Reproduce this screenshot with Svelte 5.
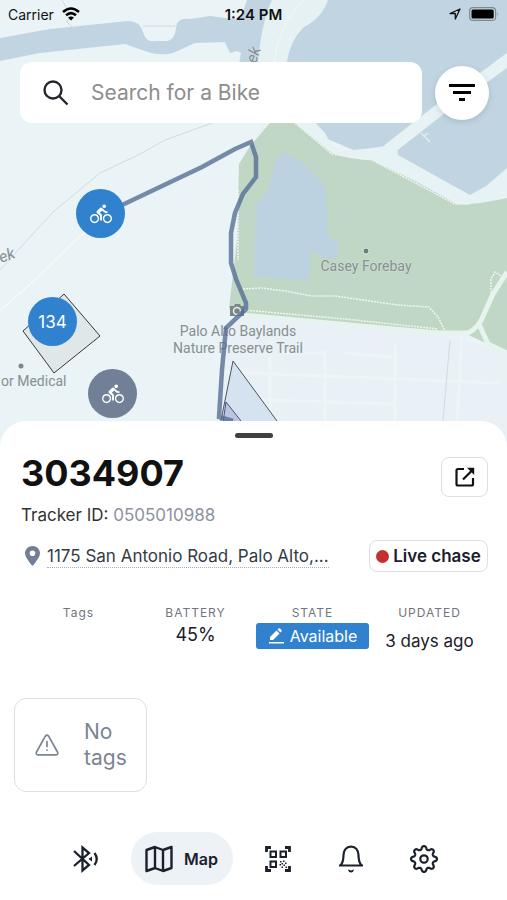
<script>
  let search = $state("");

  const pins = [
    { id: "a", x: 76, y: 189, kind: "bike", label: "Bike" },
    { id: "b", x: 28, y: 297, kind: "count", count: 134, label: "134 bikes" },
    { id: "c", x: 88, y: 369, kind: "bike", idle: true, label: "Idle bike" }
  ];

  const bike = {
    name: "3034907",
    tracker: "0505010988",
    address: "1175 San Antonio Road, Palo Alto,...",
    battery: "45%",
    state: "Available",
    updated: "3 days ago"
  };

  // outline with eight rounded teeth
  function gearPath(cx, cy) {
    let d = "";
    for (let a = 0; a < 360; a += 3) {
      const t = (a * Math.PI) / 180;
      const r = 11.3 + 1.9 * Math.tanh(1.3 * Math.cos(8 * t));
      d += (a ? "L" : "M") + (cx + r * Math.cos(t)).toFixed(2) + " " + (cy + r * Math.sin(t)).toFixed(2);
    }
    return d + "Z";
  }
</script>

<div class="app">
  <section class="map">
    <svg class="tiles" viewBox="0 0 507 450" preserveAspectRatio="xMidYMin slice" aria-hidden="true">
      <rect width="507" height="450" fill="#eaf3f5" />
      <path d="M232 315L440 335 507 352V450H215Z" fill="#e9f1f6" />
      <path d="M0 38L50 29 128 21Q140 21 143 32T155 41H168Q175 39 176 28T190 19L210 16 240 20 247 0H507V200H470L260 110 239 64 241 53 237 51 230 53 225 42 195 43 173 53Q160 56 148 52L125 44 40 53 0 61Z" fill="#c0d5e1" />
      <path d="M272 0Q262 20 258 62L240 70V140L290 160 312 123 287 62Q290 40 304 27 322 18 328 0Z" fill="#e6f1f3" />
      <path d="M0 70H240L262 123 240 200H0Z" fill="#eaf3f5" />
      <path d="M258 118H311L325 133Q333 150 345 151L380 147 397 143 398 155 470 195 486 186 507 168V215L460 215 280 160Z" fill="#e6f2f3" />
      <path d="M388 150L439 110 490 73 510 58" fill="none" stroke="#e6f2f3" stroke-width="12" />
      <path d="M421 133L430 142M424 136L428 133" stroke="#d9e7ee" stroke-width="2" />
      <path d="M304 0Q280 22 274 62" fill="none" stroke="#f3f8f8" />
      <path d="M270 123H295L332 153Q350 160 372 160L415 181 455 203Q465 207 507 198V352L488 344 466 334 438 333 232 315 229 308 237 240 239 164 250 146Z" fill="#c0d7c6" />
      <path d="M283 152L300 160 318 178 325 186 328 235 338 243 337 258 325 258 311 250 309 281 254 276 256 205 268 190 276 160Z" fill="#bcd2e0" />
      <path d="M507 272L493 294 484 314Q479 328 468 333L438 333 350 325 232 314M479 324L488 344 507 353" fill="none" stroke="#e7f3ee" stroke-width="5" />
      <path d="M243 289L262 288 285 291 312 296 335 296 398 305 429 307 438 317 445 331M244 310L345 319 438 329M295 123L332 154 372 160 455 204H470M491 293V279L495 272 501 276M238 190V260" fill="none" stroke="#edf6ef" stroke-width="1.5" stroke-dasharray="2 1" />
      <path d="M225 342L219 421M270 340V450M325 350V450M395 345V450M225 372L500 383M462 335L457 421M283 353H325M345 353L392 357M260 400L395 404" fill="none" stroke="#eef5f7" stroke-width="3" />
      <path d="M450 340L443 421" stroke="#d3dbe0" />
      <path d="M0 311L36 279 77 239 121 206" fill="none" stroke="#f6fafa" stroke-width="1.5" />
      <path d="M0 270L53 212 100 173 140 154 165 140 212 123M62 0L72 18 66 21 74 29M143 26H177" fill="none" stroke="#d2dbdc" />
      <path d="M64 294L100 336 54 373 23 331Z" fill="#dfe7e8" stroke="#34393d" />
      <g class="place">
        <text x="366" y="271" text-anchor="middle">Casey Forebay</text>
        <text x="238" y="336" text-anchor="middle">Palo Alto Baylands</text>
        <text x="238" y="353" text-anchor="middle">Nature Preserve Trail</text>
        <text x="1" y="386">or Medical</text>
        <text class="water" transform="translate(256 64) rotate(-72)">ek</text>
        <text class="water" transform="translate(1 263) rotate(-20)">ek</text>
      </g>
      <circle cx="366" cy="251" r="3" fill="#737f7b" stroke="#d8e7dd" />
      <circle cx="21" cy="366" r="2.5" fill="#808689" />
      <path d="M230 306H234L235 304H240L241 306H244V316H230Z" fill="#7c8687" />
      <circle cx="237" cy="311" r="3.5" fill="none" stroke="#e5eeeb" stroke-width="1.5" />
      <path d="M233 361L277 421V450H215Z" fill="#d5e3f1" stroke="#4a525d" />
      <path d="M226 402L241 421V450H219Z" fill="#bcc4e2" stroke="#4b5475" />
      <path d="M120 206L202 167 235 149 251 142 256 157V177L243 194 235 213 231 233V263L236 279 246 303V309L226 328 222 370 219 417 233 421" fill="none" stroke="#536b94" stroke-opacity="0.78" stroke-width="4.5" />
    </svg>

    {#each pins as pin (pin.id)}
      <button class="pin" class:idle={pin.idle} style="left: {pin.x}px; top: {pin.y}px" aria-label={pin.label}>
        {#if pin.kind === "count"}
          {pin.count}
        {:else}
          <svg width="22" height="22" viewBox="0 0 24 24" fill="currentColor" aria-hidden="true">
            <path d="M15.5 5.5c1.1 0 2-.9 2-2s-.9-2-2-2-2 .9-2 2 .9 2 2 2zM5 12c-2.8 0-5 2.2-5 5s2.2 5 5 5 5-2.2 5-5-2.2-5-5-5zm0 8.5c-1.9 0-3.5-1.6-3.5-3.5s1.6-3.5 3.5-3.5 3.5 1.6 3.5 3.5-1.6 3.5-3.5 3.5zm5.8-10l2.4-2.4.8.8c1.3 1.3 3 2.1 5.1 2.1V9c-1.5 0-2.7-.6-3.6-1.5l-1.9-1.9c-.5-.4-1-.6-1.6-.6s-1.1.2-1.4.6L7.8 8.4c-.4.4-.6.9-.6 1.4 0 .6.2 1.1.6 1.4L11 14v5h2v-6.2l-2.2-2.3zM19 12c-2.8 0-5 2.2-5 5s2.2 5 5 5 5-2.2 5-5-2.2-5-5-5zm0 8.5c-1.9 0-3.5-1.6-3.5-3.5s1.6-3.5 3.5-3.5 3.5 1.6 3.5 3.5-1.6 3.5-3.5 3.5z" />
          </svg>
        {/if}
      </button>
    {/each}

    <div class="overlay">
      <div class="status-bar">
        <span class="carrier">
          Carrier
          <svg width="18" height="14" viewBox="0 0 18 14" fill="none" stroke="#000" stroke-width="2.6" aria-hidden="true">
            <path d="M1 5Q9 -2 17 5M4 8.3Q9 4 14 8.3" />
            <path d="M9 13.5L6 10.5Q9 8.5 12 10.5Z" fill="#000" stroke="none" />
          </svg>
        </span>
        <span class="time">1:24 PM</span>
        <span class="indicators">
          <svg width="12" height="12" viewBox="0 0 12 12" fill="none" stroke="#111" stroke-width="1.3" stroke-linejoin="round" aria-hidden="true">
            <path d="M11 1L1 5.5H6.3V11Z" />
          </svg>
          <svg width="30" height="14" viewBox="0 0 30 14" aria-hidden="true">
            <rect x="0.6" y="0.6" width="26" height="12.8" rx="3.5" fill="none" stroke="#7e8a92" stroke-width="1.2" />
            <rect x="2.5" y="2.5" width="22.2" height="9" rx="1.5" />
            <path d="M28 5Q29.5 7 28 9Z" fill="#7e8a92" />
          </svg>
        </span>
      </div>

      <div class="search-row">
        <label class="search">
          <svg width="26" height="26" viewBox="0 0 26 26" fill="none" stroke="#24282d" stroke-width="2.4" aria-hidden="true">
            <circle cx="10" cy="10" r="8.5" />
            <path d="M16 16L24.5 24.5" />
          </svg>
          <input type="text" placeholder="Search for a Bike" aria-label="Search for a Bike" bind:value={search} />
        </label>
        <button class="filter" aria-label="Filter">
          <svg width="26" height="18" viewBox="0 0 26 18" aria-hidden="true">
            <path d="M0 0H26V3H0ZM4 7H22V10H4ZM10 14H16V17H10Z" />
          </svg>
        </button>
      </div>
    </div>
  </section>

  <main class="sheet">
    <div class="handle"></div>

    <div class="heading">
      <div>
        <h1>{bike.name}</h1>
        <p class="tracker">Tracker ID: <span>{bike.tracker}</span></p>
      </div>
      <button class="open" aria-label="Open bike details">
        <svg width="20" height="20" viewBox="0 0 20 20" fill="none" stroke="#111" stroke-width="2.2" aria-hidden="true">
          <path d="M9 2H3Q1.5 2 1.5 3.5V17Q1.5 18.5 3 18.5H16.500Q18 18.5 18 17V11M8 12.5L17 3.5" />
          <path d="M12 0.8H19.2V8Z" fill="#111" stroke="none" />
        </svg>
      </button>
    </div>

    <div class="location">
      <svg width="15" height="20" viewBox="0 0 15 20" aria-hidden="true">
        <path fill-rule="evenodd" d="M7.5 0C3.3 0 0 3.2 0 7.3 0 12 7.5 20 7.5 20S15 12 15 7.3C15 3.2 11.7 0 7.5 0ZM7.5 4.5A2.8 2.8 0 1 1 7.5 10.1 2.8 2.8 0 1 1 7.5 4.5Z" fill="#718096" />
      </svg>
      <a href="#address">{bike.address}</a>
      <button class="chase"><i></i>Live chase</button>
    </div>

    <dl class="stats">
      <div>
        <dt>Tags</dt>
      </div>
      <div>
        <dt>BATTERY</dt>
        <dd class="battery">{bike.battery}</dd>
      </div>
      <div>
        <dt>STATE</dt>
        <dd>
          <button class="state">
            <svg width="16" height="16" viewBox="0 0 16 16" fill="currentColor" aria-hidden="true">
              <path d="M1 14H16V15.5H1ZM2 12V9L8.5 2.5 11.5 5.5 5 12ZM9.5 1.5L10.5 .5Q11.2 0 12 .5L13.5 2Q14 2.8 13.5 3.5L12.5 4.5Z" />
            </svg>
            {bike.state}
          </button>
        </dd>
      </div>
      <div>
        <dt>UPDATED</dt>
        <dd class="updated">{bike.updated}</dd>
      </div>
    </dl>

    <div class="no-tags">
      <svg width="24" height="22" viewBox="0 0 24 22" fill="none" stroke="#7b8494" stroke-width="1.7" stroke-linejoin="round" stroke-linecap="round" aria-hidden="true">
        <path d="M10.400 2.2Q12 0 13.6 2.2L22.5 18Q23.5 20.7 21 20.8H3Q.5 20.7 1.5 18ZM12 7.5V12.5M12 16V16.2" />
      </svg>
      <span>No tags</span>
    </div>
  </main>

  <nav>
    <button aria-label="Bluetooth">
      <svg width="26" height="28" viewBox="0 0 26 28" fill="none" stroke="#1a202c" stroke-width="2.3" aria-hidden="true">
        <path d="M1 6L16 20 9.5 25.5V2.5L16 8 1 21" />
        <path d="M21.5 8Q26 14 21.5 20" />
        <path d="M19 11.5V16.5L15.5 14Z" fill="#1a202c" stroke="none" />
      </svg>
    </button>
    <button class="active" aria-current="page">
      <svg width="28" height="28" viewBox="0 0 28 28" fill="none" stroke="#1a202c" stroke-width="2.4" stroke-linejoin="round" aria-hidden="true">
        <path d="M1.5 5L10 2 18 5 26.5 2V23L18 26 10 23 1.5 26ZM10 2V23M18 5V26" />
      </svg>
      Map
    </button>
    <button aria-label="Scan code">
      <svg width="26" height="26" viewBox="0 0 26 26" fill="none" stroke="#1a202c" stroke-width="2" aria-hidden="true">
        <path d="M1.5 6V1.5H6M20 1.5H24.5V6M1.5 20V24.5H6M20 24.5H24.5V20" stroke-width="2.8" />
        <path d="M5.500 5.5H11V11H5.5ZM15.5 5.5H21V11H15.5ZM5.5 15.5H11V21H5.5Z" />
        <path d="M15 15H16.500V16.500H15ZM18 14.500H19.500V16H18ZM16.500 17H18V18.500H16.500ZM20 16.500H21.500V18H20ZM14.500 18H16V19.500H14.500ZM18.500 18.500H20V20H18.500ZM16.500 20.500H18V22H16.500ZM20.500 20.500H22V22H20.500Z" fill="#1a202c" stroke="none" />
      </svg>
    </button>
    <button aria-label="Notifications">
      <svg width="26" height="28" viewBox="0 0 26 28" fill="none" stroke="#1a202c" stroke-width="2.2" stroke-linejoin="round" aria-hidden="true">
        <path d="M1 20.5H25M2.500 20.5Q5.500 17 5.500 10 6 2 13 1.500 20 2 20.500 10 20.500 17 23.500 20.5" />
        <path d="M10 24.5L13 25.500 16 24.5Q15.500 27.5 13 27.5T10 24.5Z" fill="#1a202c" stroke="none" />
      </svg>
    </button>
    <button aria-label="Settings">
      <svg width="32" height="32" viewBox="0 0 32 32" fill="none" stroke="#1a202c" stroke-width="2.2" stroke-linejoin="round" aria-hidden="true">
        <path d={gearPath(16, 16)} />
        <circle cx="16" cy="16" r="3.7" />
      </svg>
    </button>
  </nav>
</div>

<style>
  :global(body) {
    margin: 0;
    background: #fff;
  }
  .app {
    min-height: 100vh;
    display: flex;
    flex-direction: column;
    font-family: Inter, "Liberation Sans", sans-serif;
    color: #1a202c;
  }
  button {
    font: inherit;
    color: inherit;
    padding: 0;
    border: 0;
    background: none;
    display: flex;
    align-items: center;
    justify-content: center;
    cursor: pointer;
  }
  svg {
    flex: none;
    display: block;
  }

  .map {
    position: relative;
    height: 450px;
    overflow: hidden;
  }
  .tiles {
    position: absolute;
    inset: 0;
    width: 100%;
    height: 100%;
  }
  .place {
    font-family: Roboto, sans-serif;
    font-size: 14px;
    fill: #868f91;
    paint-order: stroke;
    stroke: #eaf3f5;
    stroke-opacity: 0.4;
    stroke-width: 1px;
  }
  .water {
    font-size: 16px;
    font-style: italic;
  }
  .pin {
    position: absolute;
    width: 49px;
    height: 49px;
    border-radius: 50%;
    background: #3182ce;
    color: #fff;
    font-size: 17px;
  }
  .idle {
    background: #718096;
  }
  .overlay {
    position: relative;
  }
  .status-bar {
    height: 28px;
    padding: 0 8px;
    display: grid;
    grid-template-columns: 1fr auto 1fr;
    align-items: center;
    font-size: 14px;
    color: #111;
  }
  .carrier,
  .indicators {
    display: flex;
    align-items: center;
    gap: 8px;
  }
  .indicators {
    justify-content: flex-end;
  }
  .time {
    font-size: 15px;
    font-weight: 600;
  }
  .search-row {
    display: flex;
    align-items: center;
    gap: 13px;
    padding: 34px 18px 0 20px;
  }
  .search {
    flex: 1;
    min-width: 0;
    height: 61px;
    box-sizing: border-box;
    padding: 0 23px;
    display: flex;
    align-items: center;
    gap: 22px;
    background: #fff;
    border-radius: 12px;
  }
  .search input {
    flex: 1;
    min-width: 0;
    padding: 0;
    border: 0;
    outline: 0;
    background: none;
    font: inherit;
    font-size: 21px;
    color: #1a202c;
  }
  .search input::placeholder {
    color: #8d8d8d;
    opacity: 1;
  }
  .filter {
    width: 54px;
    height: 54px;
    border-radius: 50%;
    background: #fff;
    box-shadow: 0 2px 6px rgba(0, 0, 0, 0.12);
  }

  .sheet {
    position: relative;
    flex: 1;
    margin-top: -29px;
    padding-top: 12px;
    background: #fff;
    border-radius: 26px 26px 0 0;
  }
  .handle {
    width: 38px;
    height: 5px;
    margin: 0 auto;
    border-radius: 3px;
    background: #404040;
  }
  .heading {
    display: flex;
    justify-content: space-between;
    align-items: flex-start;
    padding: 13px 19px 0 21px;
  }
  h1 {
    margin: 0;
    font-size: 36px;
    line-height: 44px;
    font-weight: 700;
    color: #111;
  }
  .tracker {
    margin: 8px 0 0;
    font-size: 17px;
    line-height: 24px;
    color: #333;
  }
  .tracker span {
    color: #8d929e;
  }
  .open {
    width: 47px;
    height: 40px;
    margin-top: 6px;
    border: 1px solid #dcdfe4;
    border-radius: 8px;
  }
  .location {
    display: flex;
    align-items: center;
    padding: 13px 19px 0 25px;
    font-size: 17px;
  }
  .location a {
    margin-left: 7px;
    white-space: nowrap;
    line-height: 22px;
    color: #333b46;
    text-decoration: none;
    border-bottom: 1px dotted #a6adb8;
  }
  .chase {
    width: 119px;
    height: 32px;
    gap: 4px;
    margin-left: auto;
    border: 1px solid #dcdfe4;
    border-radius: 8px;
    font-weight: 600;
    white-space: nowrap;
  }
  .chase i {
    width: 13px;
    height: 13px;
    border-radius: 50%;
    background: #c53030;
  }
  .stats {
    display: grid;
    grid-template-columns: repeat(4, 1fr);
    margin: 33px 19px 0 20px;
    text-align: center;
  }
  dt {
    font-size: 12px;
    line-height: 16px;
    letter-spacing: 1px;
    color: #71757d;
  }
  dd {
    margin: 2px 0 0;
    display: flex;
    justify-content: center;
  }
  .battery {
    font-size: 18px;
    line-height: 24px;
  }
  .updated {
    margin-top: 8px;
    font-size: 17px;
    line-height: 24px;
    white-space: nowrap;
  }
  .state {
    width: 113px;
    height: 26px;
    gap: 6px;
    border-radius: 3px;
    background: #3182ce;
    color: #fff;
    font-size: 16px;
  }
  .no-tags {
    box-sizing: border-box;
    width: 133px;
    height: 94px;
    margin: 45px 0 0 14px;
    padding: 0 14px 0 20px;
    display: flex;
    align-items: center;
    gap: 25px;
    border: 1px solid #dcdfe4;
    border-radius: 12px;
    font-size: 21px;
    line-height: 26px;
    color: #7b8494;
  }

  nav {
    display: flex;
    justify-content: center;
    align-items: center;
    padding: 0 0 15px 3px;
    background: #fff;
  }
  nav button {
    width: 73px;
    height: 53px;
  }
  nav .active {
    width: 102px;
    margin: 0 9px 0 8px;
    gap: 11px;
    border-radius: 27px;
    background: #edf2f7;
    font-size: 16px;
    font-weight: 600;
  }
</style>
